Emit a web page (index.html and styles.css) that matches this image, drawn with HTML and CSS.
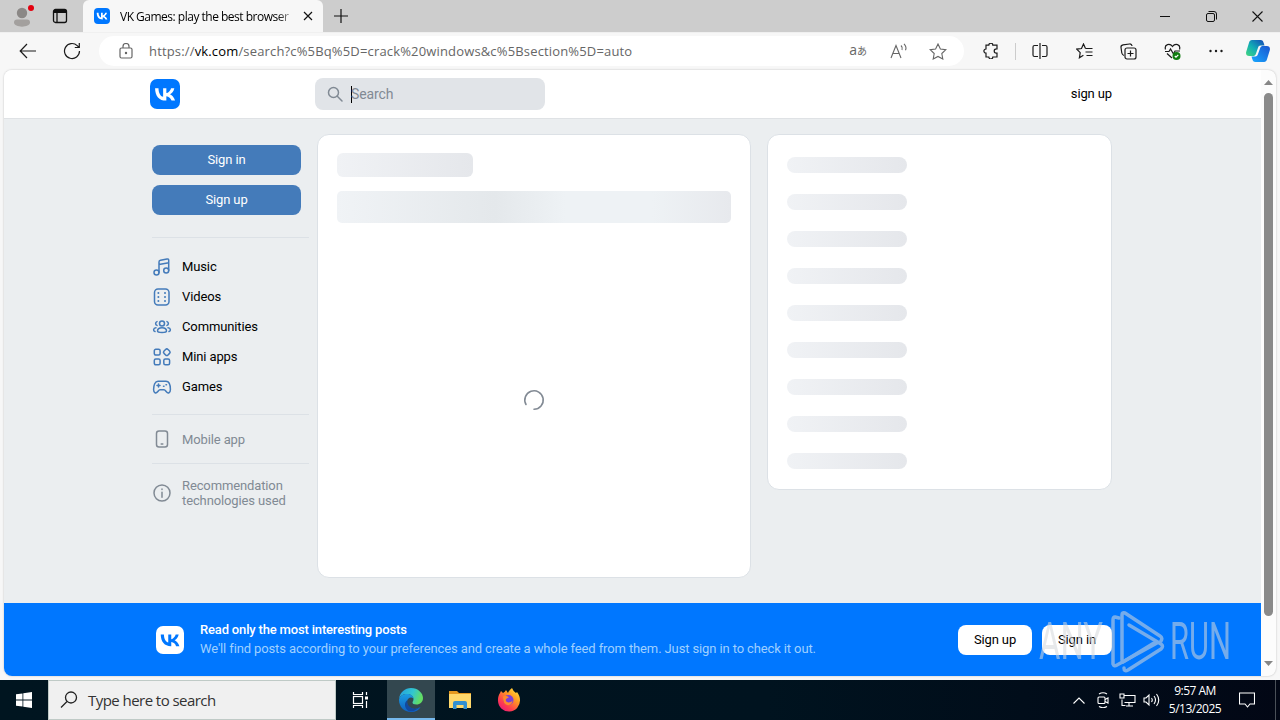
FILE: index.html
```html
<!DOCTYPE html>
<html lang="en">
<head>
    <meta charset="UTF-8">
    <meta name="viewport" content="width=device-width, initial-scale=1.0">
    <title>VK Games: play the best browser games</title>
    <link rel="stylesheet" href="styles.css">
</head>
<body>
    <svg class="defs" width="0" height="0">
        <symbol id="vk" viewBox="0 0 48 48">
            <path d="M25.54 34.58C14.6 34.58 8.36 27.08 8.1 14.6H13.58C13.76 23.76 17.8 27.64 21 28.44V14.6H26.16V22.5C29.32 22.16 32.64 18.56 33.76 14.6H38.92C38.06 19.48 34.46 23.08 31.9 24.56C34.46 25.76 38.56 28.9 40.12 34.58H34.44C33.22 30.78 30.18 27.84 26.16 27.44V34.58H25.54Z"/>
        </symbol>
    </svg>

    <!-- tabs -->
    <div class="tabs">
        <div class="profile">
            <svg width="24" height="28" viewBox="0 0 24 28">
                <circle cx="12" cy="11" r="5.2" fill="#8b8886"/>
                <path d="M4 20.500c0-2 1-3 3-3h10c2 0 3 1 3 3 0 5.500-16 5.500-16 0z" fill="#a3a09e"/>
                <circle cx="21" cy="6" r="3" fill="#e3000f"/>
            </svg>
        </div>
        <div class="tab-actions">
            <svg width="16" height="16" viewBox="0 0 16 16" fill="none" stroke="#111" stroke-width="1.3">
                <rect x="1.500" y="1.500" width="13" height="13" rx="2"/>
                <path d="M2 3.500h12" stroke-width="3"/>
                <path d="M5 4v10"/>
            </svg>
        </div>
        <div class="tab">
            <svg class="tab-logo" width="16" height="16"><use href="#vk"/></svg>
            <span class="tab-title">VK Games: play the best browser</span>
            <svg width="10" height="10" viewBox="0 0 10 10" stroke="#111" stroke-width="1.200"><path d="M1 1l8 8M9 1l-8 8"/></svg>
        </div>
        <div class="new-tab">
            <svg width="14" height="14" viewBox="0 0 14 14" stroke="#111" stroke-width="1.200"><path d="M7 0v14M0 7h14"/></svg>
        </div>
        <div class="window-btns">
            <span><svg width="10" height="10" viewBox="0 0 10 10" stroke="#111"><path d="M0 5.500h10"/></svg></span>
            <span><svg width="11" height="11" viewBox="0 0 11 11" fill="none" stroke="#111"><rect x=".5" y="2.500" width="8" height="8" rx="1.500"/><path d="M2.500 .5h5.500a2.500 2.500 0 0 1 2.500 2.500v5.500"/></svg></span>
            <span><svg width="11" height="11" viewBox="0 0 11 11" stroke="#111" stroke-width="1.100"><path d="M.5 .5l10 10M10.500 .5l-10 10"/></svg></span>
        </div>
    </div>

    <!-- address bar -->
    <div class="toolbar">
        <span class="tool"><svg width="18" height="16" viewBox="0 0 18 16"><path d="M17 8H1.500M8 1L1.200 8 8 15"/></svg></span>
        <span class="tool"><svg width="18" height="18" viewBox="0 0 18 18"><path d="M16.500 9a7.500 7.500 0 1 1-2.300-5.400L16 5.300M16.300 1v4.500h-4.500"/></svg></span>
        <div class="address">
            <svg width="14" height="16" viewBox="0 0 14 16" fill="none" stroke="#666" stroke-width="1.200"><rect x="1" y="5" width="12" height="10" rx="1.500"/><path d="M4 5V3.500a3 3 0 0 1 6 0V5"/><circle cx="7" cy="10" r=".6" fill="#666"/></svg>
            <span class="url">https://<b>vk.com</b>/search?c%5Bq%5D=crack%20windows&amp;c%5Bsection%5D=auto</span>
            <span class="translate">a<small>あ</small></span>
            <svg class="read" width="18" height="16" viewBox="0 0 18 16"><path d="M1 15L6 2.500 11 15M3 10.500h6M11 2.500q2 2 1 4.500M14 .8q3 3 1.500 6.500"/></svg>
            <svg width="18" height="17" viewBox="0 0 18 17"><path d="M9 1l2.400 5 5.400.7-4 3.800 1 5.500L9 13.400 4.200 16l1-5.500-4-3.800 5.400-.7z"/></svg>
        </div>
        <span class="tool"><svg width="16" height="16" viewBox="0 0 16 16"><path d="M3 2.200h2.800a2 2 0 0 1 4 0H14v3.600h-.6a2.200 2.200 0 1 0 0 4.400h.6V14H9.800a2 2 0 0 1-4 0H3v-3.800a2.100 2.100 0 0 1 0-4.200z"/></svg></span>
        <span class="divider"></span>
        <span class="tool"><svg width="16" height="16" viewBox="0 0 16 16"><path d="M6 2.500H2.500a1.500 1.500 0 0 0-1.500 1.500v8a1.500 1.500 0 0 0 1.500 1.500H6M10 2.500h3.500A1.500 1.500 0 0 1 15 4v8a1.500 1.500 0 0 1-1.500 1.500H10M8 0v16"/></svg></span>
        <span class="tool"><svg width="17" height="16" viewBox="0 0 17 16"><path d="M9.500 5.500L7.500 1l-2 4.500-4.700.6 3.400 3.500-.8 5.200 4-2.500M9.500 5.500h7M9.500 9h7M10.500 12.500h6"/></svg></span>
        <span class="tool"><svg width="17" height="17" viewBox="0 0 17 17"><path d="M4 12.500C2.500 12 2 11 1.800 10L1 4.500C.8 3 1.800 2 3 1.800L9.500 1c1.500-.2 2.300.5 2.600 2"/><rect x="5" y="5" width="11" height="11" rx="2"/><path d="M10.500 7.500v6M7.500 10.500h6"/></svg></span>
        <span class="tool"><svg width="17" height="17" viewBox="0 0 17 17"><path d="M1.500 6.500C0 1 6 0 8.500 3.500 11 0 17 1 15.500 6.500M1 8.500h4L6.500 6l3 5 1.500-3h5M3 10.500L8 15"/><circle cx="12.500" cy="13" r="4" fill="#107c10" stroke="none"/><path d="M10.800 13l1.200 1.200 2.300-2.400" stroke="#fff"/></svg></span>
        <span class="tool"><svg width="14" height="4" viewBox="0 0 14 4" class="dots"><circle cx="1.500" cy="2" r="1.200"/><circle cx="7" cy="2" r="1.200"/><circle cx="12.500" cy="2" r="1.200"/></svg></span>
        <span class="copilot">
            <svg width="24" height="24" viewBox="0 0 24 24">
                <defs>
                    <linearGradient id="cp1" x1="0" y1="1" x2="1" y2="0"><stop offset="0" stop-color="#42d67d"/><stop offset=".45" stop-color="#12aeb5"/><stop offset="1" stop-color="#1546b8"/></linearGradient>
                    <linearGradient id="cp2" x1="0" y1="1" x2="1" y2="0"><stop offset="0" stop-color="#18a8ff"/><stop offset="1" stop-color="#1a55cf"/></linearGradient>
                </defs>
                <path d="M6 1h8.500c2 0 2.700 1 3.200 3l.8 2.500h-3.800c-1.600 0-2.200.7-2.700 2.300L10 14.500c-.6 2-1.500 2.500-3.500 2.500H3.200C.5 17-.5 15 .3 12.400L3 3.700C3.500 2 4.400 1 6 1z" fill="url(#cp1)"/>
                <path d="M18 23H9.500c-2 0-2.700-1-3.200-3L5.500 17.400h3.800c1.600 0 2.200-.7 2.700-2.300L14 9.500C14.600 7.500 15.500 7 17.500 7h3.300c2.700 0 3.700 2 2.900 4.600L21 20.300c-.5 1.700-1.400 2.700-3 2.700z" fill="url(#cp2)"/>
            </svg>
        </span>
    </div>

    <!-- page -->
    <div class="viewport">
        <div class="page">
            <header class="header">
                <svg class="logo" width="30" height="30"><use href="#vk"/></svg>
                <div class="search">
                    <svg width="16" height="16" viewBox="0 0 16 16" fill="none" stroke="#818a94" stroke-width="1.500" stroke-linecap="round"><circle cx="6.500" cy="6.500" r="5"/><path d="M10.300 10.300L15 15"/></svg>
                    <span>Search</span>
                </div>
                <a class="header-link">sign up</a>
            </header>

            <div class="content">
                <aside class="side">
                    <a class="side-btn">Sign in</a>
                    <a class="side-btn">Sign up</a>
                    <hr>
                    <nav class="menu">
                        <a><svg width="20" height="20" viewBox="0 0 20 20"><circle cx="4.500" cy="15.500" r="2.500"/><circle cx="14.200" cy="13.500" r="2.500"/><path d="M7 15.500V5q0-1.500 1.500-1.800L15 2q1.700-.3 1.700 1.300v10.200M7 7.500l9.700-1.800"/></svg><span>Music</span></a>
                        <a><svg width="20" height="20" viewBox="0 0 20 20"><rect x="2.500" y="2" width="14.500" height="16" rx="3.500"/><g class="fill"><circle cx="6.400" cy="6" r="1"/><circle cx="6.400" cy="10" r="1"/><circle cx="6.400" cy="14" r="1"/><circle cx="13" cy="6" r="1"/><circle cx="13" cy="10" r="1"/><circle cx="13" cy="14" r="1"/></g></svg><span>Videos</span></a>
                        <a><svg width="20" height="20" viewBox="0 0 20 20"><circle cx="10" cy="6.500" r="2.500"/><path d="M5.500 14c0-4.500 9-4.500 9 0 0 2-9 2-9 0zM5 4.600a2 2 0 0 0 0 3.800M15 4.600a2 2 0 0 1 0 3.800M3 14.500C1 14 1 11 4 10.800M17 14.500c2-.5 2-3.500-1-3.700"/></svg><span>Communities</span></a>
                        <a><svg width="20" height="20" viewBox="0 0 20 20"><rect x="2.300" y="2.300" width="5.800" height="5.800" rx="1.500"/><rect x="12" y="2.400" width="5.600" height="5.600" rx="1.700" transform="rotate(45 14.800 5.200)"/><rect x="2.300" y="12" width="5.800" height="5.800" rx="1.500"/><rect x="11.800" y="12" width="5.800" height="5.800" rx="1.500"/></svg><span>Mini apps</span></a>
                        <a><svg width="20" height="20" viewBox="0 0 20 20"><path d="M6 4.200h8c3 0 4.400 4 4.400 8.300 0 3.600-2.400 4.300-4 2.300-1-1.300-1.400-2.100-2.400-2.100H8c-1 0-1.400.8-2.400 2.100-1.600 2-4 1.300-4-2.300C1.600 8.200 3 4.200 6 4.200zM6.500 7v3M5 8.500h3M11.500 9.300h.5M14 7.800h.5"/></svg><span>Games</span></a>
                    </nav>
                    <hr>
                    <a class="extra"><svg width="20" height="20" viewBox="0 0 20 20"><rect x="4.500" y="2" width="11" height="16" rx="2.500"/><path d="M9.200 15h1.600"/></svg>Mobile app</a>
                    <hr>
                    <a class="extra"><svg width="20" height="20" viewBox="0 0 20 20"><circle cx="10" cy="10" r="8"/><path d="M10 9.200v5M10 6v.5"/></svg><span>Recommendation<br>technologies used</span></a>
                </aside>

                <main class="card results">
                    <div class="bone bone-title"></div>
                    <div class="bone bone-wide"></div>
                    <svg class="spinner" width="22" height="22" viewBox="0 0 22 22" fill="none" stroke="#828a94" stroke-width="1.600" stroke-linecap="round"><path d="M3 15.500A9.200 9.200 0 1 1 11 20.200"/></svg>
                </main>

                <section class="card filters">
                    <div class="bone"></div>
                    <div class="bone"></div>
                    <div class="bone"></div>
                    <div class="bone"></div>
                    <div class="bone"></div>
                    <div class="bone"></div>
                    <div class="bone"></div>
                    <div class="bone"></div>
                    <div class="bone"></div>
                </section>
            </div>

            <footer class="banner">
                <svg class="banner-logo" width="28" height="28"><use href="#vk"/></svg>
                <div class="banner-text">
                    <strong>Read only the most interesting posts</strong>
                    <p>We'll find posts according to your preferences and create a whole feed from them. Just sign in to check it out.</p>
                </div>
                <a class="banner-btn">Sign up</a>
                <a class="banner-btn dim">Sign in</a>
            </footer>
        </div>
        <div class="scrollbar">
            <svg width="9" height="5" viewBox="0 0 9 5"><path d="M4.500 0L9 5H0z"/></svg>
            <div class="thumb"></div>
            <svg width="9" height="5" viewBox="0 0 9 5"><path d="M4.500 5L9 0H0z"/></svg>
        </div>
    </div>

    <!-- watermark -->
    <svg class="watermark" width="200" height="70" viewBox="0 0 200 70">
        <text x="3" y="54" textLength="64" lengthAdjust="spacingAndGlyphs">ANY</text>
        <text x="134" y="54" textLength="61" lengthAdjust="spacingAndGlyphs">RUN</text>
        <g fill="none" stroke-width="3.500" stroke-linejoin="round" stroke-linecap="round">
            <path d="M83 13l-4-1q-2 0-2 3v44q1 3 4 1L121 38"/>
            <path d="M125 36q2-3-1-5L89 8q-3-1-3 2v45"/>
            <path d="M93 20l32 19q3 2 0 5L92 65q-4 2-4-2"/>
            <path d="M87 57l31-19"/>
        </g>
    </svg>

    <!-- taskbar -->
    <div class="taskbar">
        <span class="start"><svg width="16" height="16" viewBox="0 0 16 16" fill="#fff"><path d="M0 2.300l6.500-.9v6.200H0zM7.300 1.300L16 0v7.600H7.300zM0 8.400h6.500v6.200L0 13.700zM7.300 8.400H16V16l-8.700-1.300z"/></svg></span>
        <div class="task-search">
            <svg width="18" height="18" viewBox="0 0 18 18" fill="none" stroke="#222" stroke-width="1.300"><circle cx="11" cy="6.500" r="5.500"/><path d="M7 10.500L1 16.500"/></svg>
            <span>Type here to search</span>
        </div>
        <span class="task"><svg width="17" height="16" viewBox="0 0 17 16" fill="none" stroke="#fff" stroke-width="1.200"><path d="M1.500 0v2.500h9V0M1.500 16v-2.500h9V16M14.500 0v3M14.500 9v7"/><rect x="1.500" y="4.500" width="9" height="7"/><path d="M13 6h3" stroke-width="3"/></svg></span>
        <span class="task active">
            <svg width="24" height="24" viewBox="0 0 24 24">
                <defs>
                    <linearGradient id="e1" x1="0" y1="0" x2="1" y2=".3"><stop offset="0" stop-color="#229ce0"/><stop offset=".6" stop-color="#32c6d0"/><stop offset="1" stop-color="#62dd65"/></linearGradient>
                    <linearGradient id="e2" x1="0" y1="0" x2="0" y2="1"><stop offset="0" stop-color="#1b9de2"/><stop offset="1" stop-color="#0f5fc0"/></linearGradient>
                </defs>
                <path d="M0 11C1 4 6 0 12 0c7 0 12 5 12 10 0 4-3 6.500-6.500 6.500-3 0-4-1-4-2s1-1.500 1-3.500c0-3-3-5-6.500-5C4 6 1 8 0 11z" fill="url(#e1)"/>
                <path d="M0 11.500C1 7.500 4.500 6 8 6c3.500 0 6.500 2 6.500 4.500C12 8.500 8 10 8 14c0 5 5 8 10.500 6.500l3-1.500C20 22 16.500 24 12 24 5 24 0 18.500 0 12z" fill="url(#e2)"/>
                <path d="M8.500 12C7 17 12 21.500 18 20.500l3.500-1.800C17 23 12 24 9.500 23 5 20 5 14 8.500 12z" fill="#12489e"/>
            </svg>
        </span>
        <span class="task">
            <svg width="22" height="20" viewBox="0 0 22 20"><path d="M0 1h8l2 2h12v5H0z" fill="#e5991f"/><path d="M0 4h22v14H0z" fill="#ffd86b"/><path d="M4 19v-6q0-2 2-2h10q2 0 2 2v6h-3.500v-4h-7v4z" fill="#318fd0"/></svg>
        </span>
        <span class="task">
            <svg width="24" height="24" viewBox="0 0 24 24">
                <defs><linearGradient id="f1" x1="1" y1="0" x2=".2" y2="1"><stop offset="0" stop-color="#fff044"/><stop offset=".4" stop-color="#ff9b22"/><stop offset=".75" stop-color="#ff3d4e"/><stop offset="1" stop-color="#e81a78"/></linearGradient></defs>
                <path d="M3 5l1-2 2 2q2-1 3-3l2 3q1-3 4-5 1 3 4 5l1-1c2 3 3 5 3 8a11 11 0 0 1-22 1C.8 10 1.500 7 3 5z" fill="url(#f1)"/>
                <circle cx="11.500" cy="12" r="5" fill="#7a3fd6"/>
                <path d="M6 8.500q3-2 6 .8l-3 1.700q-1 3 2.500 3.500 3 0 4-2Q15 17 11 17.200 6 17 6 8.500z" fill="#ff8a2a"/>
            </svg>
        </span>
        <div class="tray">
            <span><svg width="12" height="7" viewBox="0 0 12 7"><path d="M.5 6.500L6 1l5.500 5.500"/></svg></span>
            <span><svg width="14" height="16" viewBox="0 0 14 16"><rect x="2" y="5" width="7" height="6.500" rx="1"/><path d="M9 7.500l3-1.500v5L9 9.500M3 2q4-2.500 8 0M3 14.500q4 2.500 8 0"/></svg></span>
            <span><svg width="17" height="14" viewBox="0 0 17 14"><path d="M5.500 2.500H16v7H5.500M10 9.500V13M7 13h7M3 6.500v6h3.500M1 1h4v4H1z"/></svg></span>
            <span><svg width="17" height="14" viewBox="0 0 17 14"><path d="M1 5h2l3-3v10L3 9H1zM8.500 5q1.500 2 0 4M11 3q3 4 0 8M13.500 1q4.500 6 0 12"/></svg></span>
        </div>
        <div class="clock">9:57 AM<br>5/13/2025</div>
        <span class="notify"><svg width="16" height="16" viewBox="0 0 16 16"><path d="M.5 1h15v11H11l-2.500 3L6 12H.5z"/></svg></span>
    </div>
</body>
</html>
```
FILE: styles.css
```css
*{
    margin: 0; padding: 0;
    box-sizing: border-box;
}
body{
    width: 1280px;
    height: 720px;
    overflow: hidden;
    display: flex;
    flex-direction: column;
    background: #f7f7f7;
    font-family: "Open Sans", "Noto Sans", sans-serif;
    color: #000;
}
svg{
    flex-shrink: 0;
}
.defs{
    position: absolute;
}

/* tabs */
.tabs{
    display: flex;
    align-items: center;
    height: 32px;
    background: #cdcdcd;
}
.profile{
    width: 44px;
    height: 32px;
    padding: 2px 0 0 10px;
}
.tab-actions{
    width: 39px;
    padding-left: 8px;
    height: 16px;
}
.tab-actions svg, .profile svg{
    display: block;
}
.tab{
    display: flex;
    align-items: center;
    width: 240px;
    height: 32px;
    padding-left: 11px;
    background: #f7f7f7;
    border-radius: 6px 6px 0 0;
}
.tab-logo{
    background: #07f;
    fill: #fff;
    border-radius: 4px;
}
.tab-title{
    width: 171px;
    margin: 0 12px 0 10px;
    font-size: 12px;
    letter-spacing: -.5px;
    white-space: nowrap;
    -webkit-mask-image: linear-gradient(90deg, #000 92%, rgba(0,0,0,.3));
    mask-image: linear-gradient(90deg, #000 92%, rgba(0,0,0,.3));
}
.new-tab{
    padding-left: 11px;
    height: 14px;
}
.new-tab svg{
    display: block;
}
.window-btns{
    display: flex;
    margin-left: auto;
}
.window-btns span{
    display: flex;
    justify-content: center;
    width: 46px;
}

/* address bar */
.toolbar{
    display: flex;
    align-items: center;
    height: 38px;
    padding: 0 0 1px 6px;
    border-top: 1px solid #f0f0f0;
}
.tool{
    display: flex;
    justify-content: center;
    width: 44px;
}
.tool svg{
    fill: none;
    stroke: #1b1b1b;
    stroke-width: 1.2;
}
.tool .dots{
    fill: #1b1b1b;
    stroke: none;
}
.address{
    display: flex;
    align-items: center;
    width: 865px;
    height: 30px;
    margin: 0 5px;
    padding: 0 17px 0 20px;
    background: #fff;
    border-radius: 15px;
}
.address > svg:last-child, .read{
    fill: none;
    stroke: #666;
    stroke-width: 1.1;
}
.url{
    margin-left: 16px;
    font-size: 13px;
    letter-spacing: .16px;
    color: #666;
    white-space: nowrap;
}
.url b{
    font-weight: 400;
    color: #000;
}
.translate{
    margin: -3px 0 0 auto;
    font-size: 14px;
    color: #666;
    white-space: nowrap;
}
.translate small{
    font-family: "Noto Sans CJK JP", sans-serif;
    font-size: 10px;
}
.read{
    margin: 0 21px 0 23px;
}
.divider{
    width: 1px;
    height: 17px;
    margin: 0 2px;
    background: #ccc;
}
.copilot{
    display: flex;
    justify-content: center;
    width: 40px;
}

/* page */
.viewport{
    display: flex;
    width: 1272px;
    height: 606px;
    margin: 0 0 4px 4px;
    border-radius: 8px;
    overflow: hidden;
    background: #fcfcfc;
    box-shadow: 0 0 2px rgba(0,0,0,.25);
}
.page{
    display: flex;
    flex-direction: column;
    width: 1257px;
    background: #ebeef0;
    font-family: Roboto, sans-serif;
    font-size: 13px;
    letter-spacing: -.12px;
}
.header{
    display: flex;
    align-items: center;
    height: 49px;
    padding: 0 149px 0 146px;
    background: #fff;
    border-bottom: 1px solid #dfe2e5;
}
.logo{
    background: #07f;
    fill: #fff;
    border-radius: 7px;
}
.search{
    display: flex;
    align-items: center;
    width: 230px;
    height: 32px;
    margin-left: 135px;
    padding-left: 12px;
    border-radius: 8px;
    background: #e1e4e8;
    color: #818a94;
    font-size: 14px;
}
.search span{
    margin-left: 8px;
    border-left: 1px solid #000;
    line-height: 17px;
    text-indent: -1px;
}
.header-link{
    margin: -2px 0 0 auto;
}
.content{
    display: flex;
    align-items: flex-start;
    height: 484px;
    padding: 15px 0 0 148px;
}
.side{
    width: 165px;
    padding: 11px 8px 0 0;
}
.side-btn{
    display: block;
    width: 149px;
    height: 30px;
    margin-bottom: 10px;
    border-radius: 8px;
    background: #447bba;
    color: #fff;
    line-height: 30px;
    text-align: center;
}
.side hr{
    border: none;
    border-top: 1px solid #dce1e6;
}
.side-btn + hr{
    margin-top: 22px;
}
.menu{
    padding: 14px 0 12px;
}
.menu a, .extra{
    display: flex;
    align-items: center;
    gap: 10px;
    height: 30px;
}
.menu span{
    padding-bottom: 2px;
}
.side svg{
    fill: none;
    stroke: #447bba;
    stroke-width: 1.5;
    stroke-linecap: round;
}
.side .fill{
    fill: #447bba;
    stroke: none;
}
.extra{
    height: 48px;
    line-height: 15px;
    color: #818a94;
}
.side .extra svg{
    stroke: #818a94;
}
.extra:last-child{
    height: 58px;
}
.card{
    background: #fff;
    border: 1px solid #dce1e6;
    border-radius: 12px;
}
.results{
    display: flex;
    flex-direction: column;
    width: 434px;
    height: 444px;
    padding: 18px 19px;
}
.filters{
    display: flex;
    flex-direction: column;
    gap: 21px;
    width: 345px;
    height: 356px;
    margin-left: 16px;
    padding: 22px 19px 0;
}
.bone{
    border-radius: 8px;
    background: linear-gradient(90deg, #f0f2f5, #e5e7eb);
}
.filters .bone{
    width: 120px;
    height: 16px;
}
.bone-title{
    width: 136px;
    height: 24px;
    border-radius: 6px;
}
.bone-wide{
    height: 32px;
    margin-top: 14px;
    border-radius: 5px;
    background: linear-gradient(90deg, #f0f3f6, #e4e8eb 40%, #eef2f5 58%, #eef2f5 80%, #e7e9ed);
}
.spinner{
    align-self: center;
    margin-top: 166px;
}

/* banner */
.banner{
    display: flex;
    align-items: center;
    height: 73px;
    padding: 0 149px 0 152px;
    background: #07f;
    color: #fff;
}
.banner-logo{
    background: #fff;
    fill: #07f;
    border-radius: 7px;
}
.banner-text{
    margin: -2px auto 0 16px;
    line-height: 19px;
    white-space: nowrap;
}
.banner-text strong{
    font-weight: 500;
    letter-spacing: -.17px;
}
.banner-text p{
    color: #9fd0ff;
}
.banner-btn{
    width: 74px;
    height: 30px;
    margin-left: 10px;
    border-radius: 8px;
    background: #fff;
    color: #000;
    line-height: 30px;
    text-align: center;
}
.banner-btn.dim{
    width: 70px;
}

.scrollbar{
    display: flex;
    flex-direction: column;
    align-items: center;
    width: 15px;
    padding-top: 10px;
    fill: #868686;
}
.thumb{
    width: 9px;
    height: 523px;
    margin: 8px 0 45px;
    border-radius: 5px;
    background: #8a8a8a;
}

.watermark{
    position: absolute;
    left: 1036px;
    top: 605px;
    fill: #d5d8dc;
    stroke: #d5d8dc;
    opacity: .55;
}
.watermark text{
    font-family: Roboto, sans-serif;
    font-size: 51px;
    stroke: none;
}

/* taskbar */
.taskbar{
    display: flex;
    height: 40px;
    background: linear-gradient(90deg, #001520, #00131f 60%, #020715);
    color: #fff;
}
.taskbar > span, .tray span{
    display: flex;
    align-items: center;
    justify-content: center;
}
.start{
    width: 48px;
}
.task-search{
    display: flex;
    align-items: center;
    gap: 10px;
    width: 288px;
    padding-left: 11px;
    background: #f0f0f0;
    border: 1px solid #bfcac6;
    color: #333;
    font-size: 15px;
    letter-spacing: -.55px;
}
.task{
    width: 49px;
}
.task-search + .task{
    width: 51px;
    padding-right: 2px;
}
.task.active{
    width: 48px;
    background: #33474f;
    border-bottom: 2px solid #76b9ed;
    padding-top: 2px;
}
.tray{
    display: flex;
    margin-left: auto;
}
.tray span{
    width: 24px;
}
.tray svg, .notify svg{
    fill: none;
    stroke: #fff;
    stroke-width: 1.1;
}
.clock{
    width: 64px;
    padding-top: 2px;
    font-size: 12px;
    line-height: 18px;
    letter-spacing: -.5px;
    text-align: center;
}
.notify{
    width: 49px;
    padding-right: 9px;
    border-right: 1px solid #4a5058;
    margin-right: 4px;
}
```
